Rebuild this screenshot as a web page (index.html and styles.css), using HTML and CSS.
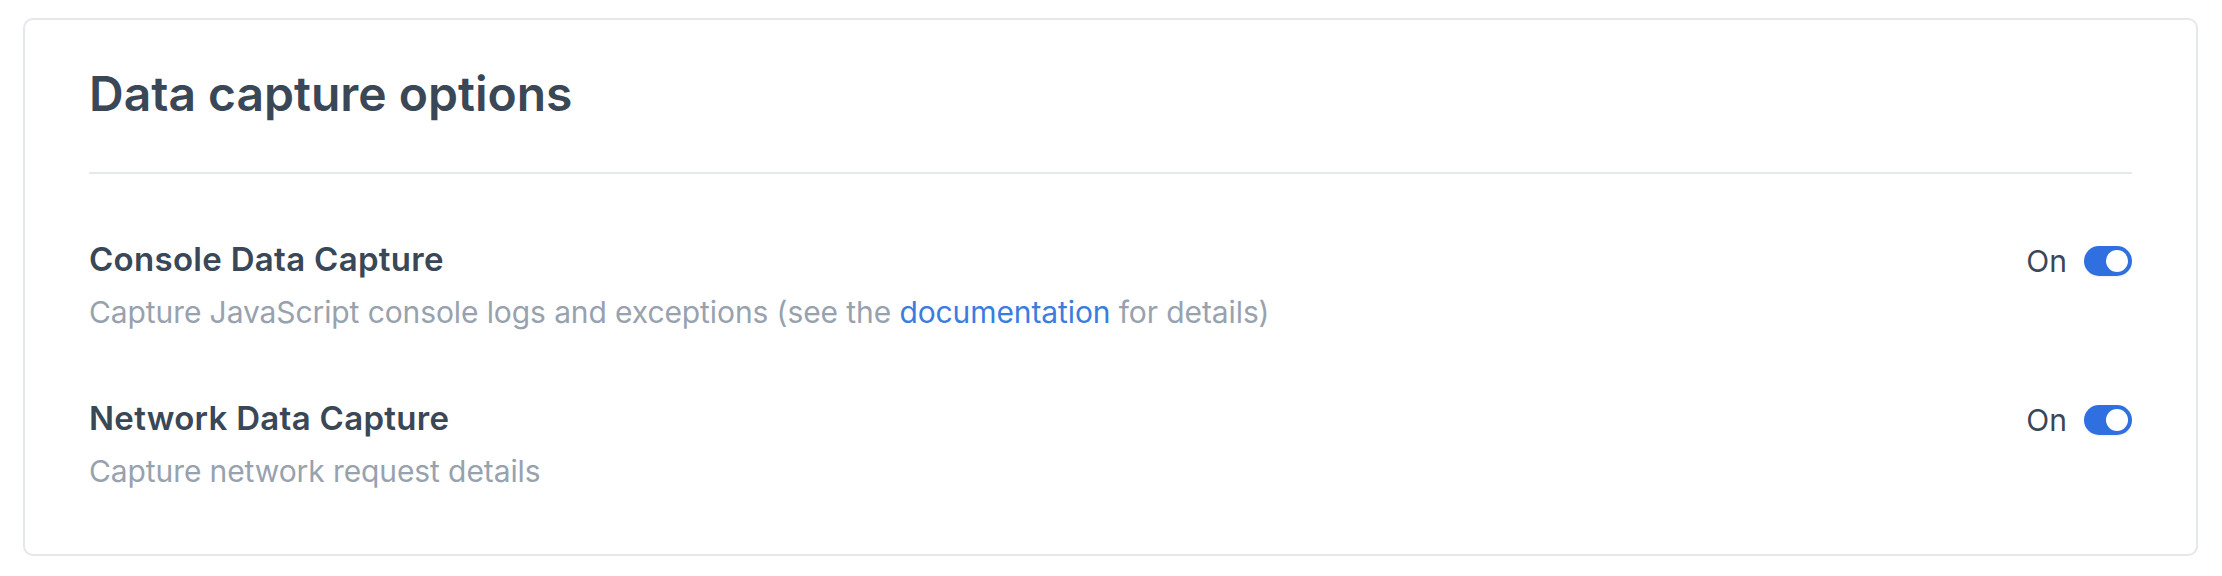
FILE: index.html
```html
<!DOCTYPE html>
<html lang="en">
<head>
<meta charset="utf-8">
<title>Data capture options</title>
<link rel="stylesheet" href="styles.css">
</head>
<body>
<section class="card">
  <header class="card-header">
    <h2 class="card-title">Data capture options</h2>
  </header>
  <div class="rows">
    <div class="row">
      <div class="row-text">
        <div class="row-title">Console Data Capture</div>
        <div class="row-desc">Capture JavaScript console logs and exceptions (see the <a class="link" href="#">documentation</a> for details)</div>
      </div>
      <div class="control">
        <span class="state">On</span>
        <span class="toggle"><span class="knob"></span></span>
      </div>
    </div>
    <div class="row">
      <div class="row-text">
        <div class="row-title">Network Data Capture</div>
        <div class="row-desc">Capture network request details</div>
      </div>
      <div class="control">
        <span class="state">On</span>
        <span class="toggle"><span class="knob"></span></span>
      </div>
    </div>
  </div>
</section>
</body>
</html>
```
FILE: styles.css
```css
* { box-sizing: border-box; }
html, body { margin: 0; padding: 0; background: #ffffff; }
body {
  padding: 18px 24px 19px 23px;
  font-family: Inter, Roboto, "Noto Sans", "Liberation Sans", sans-serif;
  color: #3a4756;
}
.card {
  border: 2px solid #e4e7eb;
  border-radius: 10px;
  padding: 0 64px;
  background: #fff;
}
.card-header {
  padding: 46px 0 50px;
  border-bottom: 2px solid #e5e8ec;
}
.card-title {
  margin: 0;
  font-size: 48px;
  line-height: 56px;
  font-weight: 600;
  color: #3a4756;
}
.rows {
  display: flex;
  flex-direction: column;
  gap: 66px;
  padding: 65px 0 63px;
}
.row {
  display: flex;
  justify-content: space-between;
  align-items: flex-start;
}
.row-text {
  display: flex;
  flex-direction: column;
  gap: 13px;
}
.row-title {
  font-size: 33px;
  line-height: 40px;
  font-weight: 600;
  letter-spacing: 0.3px;
  color: #3a4756;
}
.row-desc {
  font-size: 30px;
  line-height: 40px;
  font-weight: 400;
  letter-spacing: -0.1px;
  color: #98a2ae;
}
.link {
  color: #3b7dde;
  text-decoration: none;
}
.control {
  display: flex;
  align-items: center;
  gap: 17px;
  height: 43px;
}
.state {
  font-size: 30px;
  line-height: 40px;
  color: #3a4756;
}
.toggle {
  display: flex;
  align-items: center;
  justify-content: flex-end;
  width: 48px;
  height: 30px;
  padding: 0 4px;
  border-radius: 15px;
  background: #2f6fe0;
  box-shadow: 0 1px 2px rgba(0, 0, 0, 0.08);
}
.knob {
  width: 22px;
  height: 22px;
  border-radius: 50%;
  background: #ffffff;
}
```
